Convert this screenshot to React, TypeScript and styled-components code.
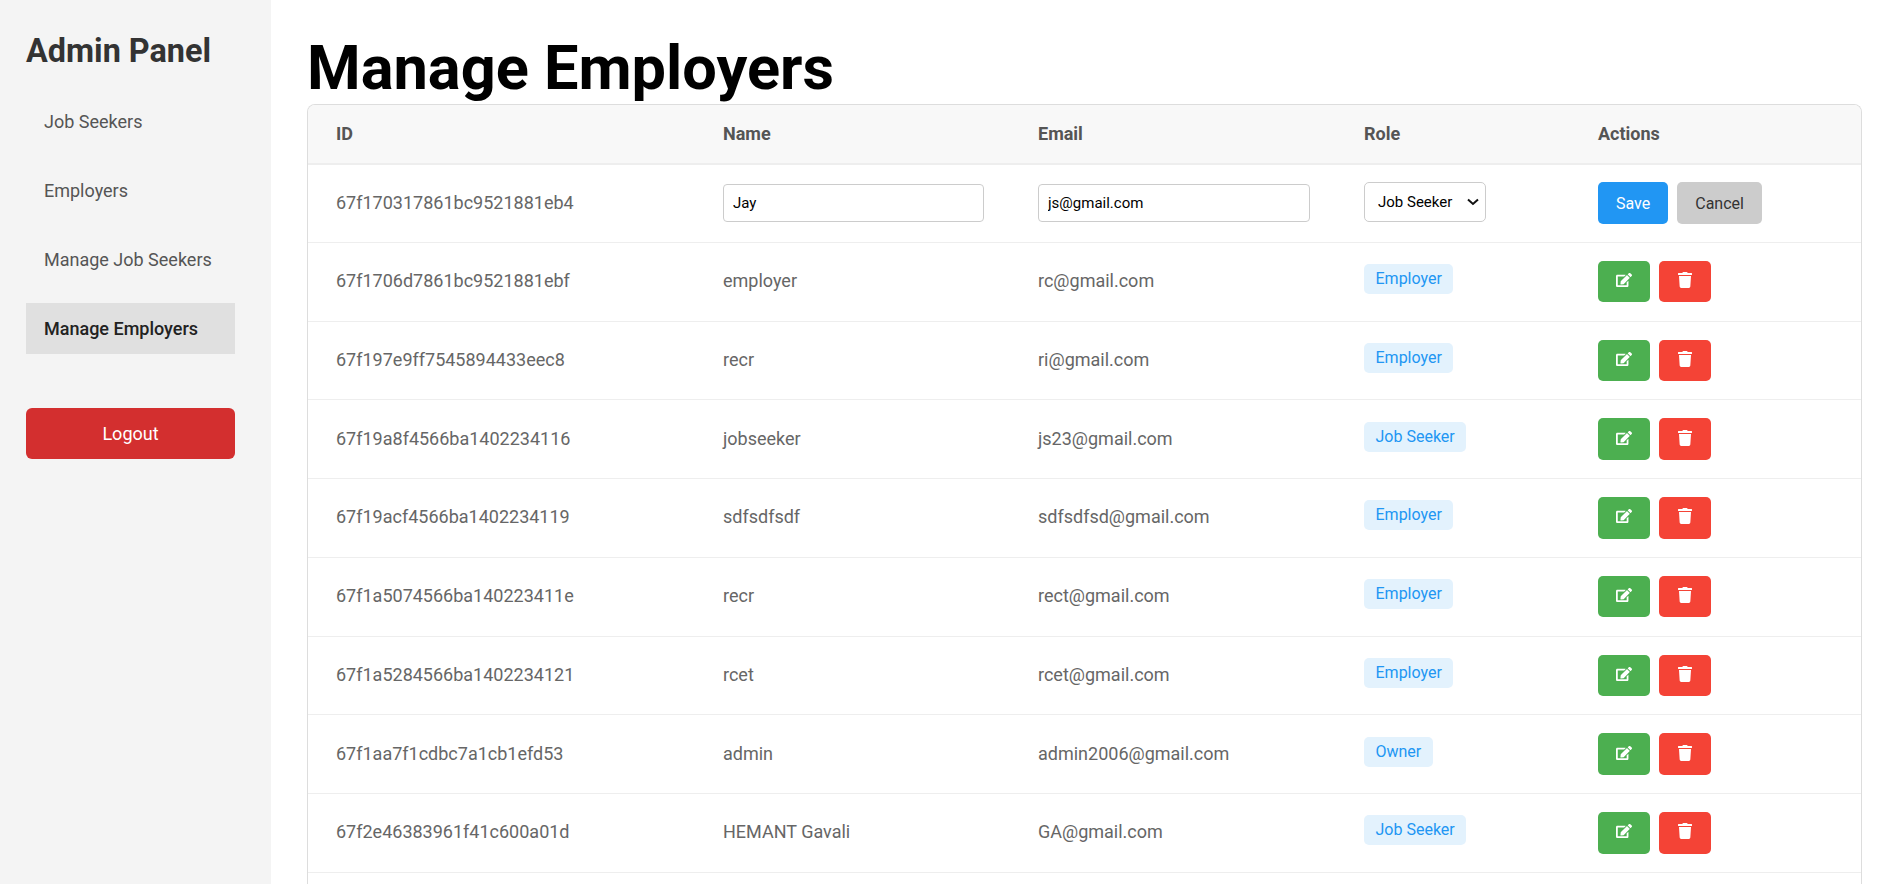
import React from "react";
import styled, { createGlobalStyle } from "styled-components";
import { FaEdit, FaTrash } from "react-icons/fa";

const GlobalStyle = createGlobalStyle`
    html, body {
        margin: 0;
        height: 100%;
        overflow: hidden;
        background: #fff;
        font-family: Roboto, "Liberation Sans", sans-serif;
    }
    * {
        box-sizing: border-box;
    }
`;

type Employer = { id: string; name: string; email: string; role: string };

const employers: Employer[] = [
    { id: "67f1706d7861bc9521881ebf", name: "employer", email: "rc@gmail.com", role: "Employer" },
    { id: "67f197e9ff7545894433eec8", name: "recr", email: "ri@gmail.com", role: "Employer" },
    { id: "67f19a8f4566ba1402234116", name: "jobseeker", email: "js23@gmail.com", role: "Job Seeker" },
    { id: "67f19acf4566ba1402234119", name: "sdfsdfsdf", email: "sdfsdfsd@gmail.com", role: "Employer" },
    { id: "67f1a5074566ba140223411e", name: "recr", email: "rect@gmail.com", role: "Employer" },
    { id: "67f1a5284566ba1402234121", name: "rcet", email: "rcet@gmail.com", role: "Employer" },
    { id: "67f1aa7f1cdbc7a1cb1efd53", name: "admin", email: "admin2006@gmail.com", role: "Owner" },
    { id: "67f2e46383961f41c600a01d", name: "HEMANT Gavali", email: "GA@gmail.com", role: "Job Seeker" },
];

const navItems = ["Job Seekers", "Employers", "Manage Job Seekers", "Manage Employers"];

const chevron =
    "url(\"data:image/svg+xml,%3Csvg xmlns='http://www.w3.org/2000/svg' width='12' height='8' viewBox='0 0 12 8'%3E%3Cpath d='M1 1.5l5 4.5 5-4.5' fill='none' stroke='%23111' stroke-width='2'/%3E%3C/svg%3E\")";

export default function App() {
    return (
        <Page>
            <GlobalStyle />
            <Sidebar>
                <Brand>Admin Panel</Brand>
                <NavList>
                    {navItems.map((item) => (
                        <NavItem key={item} $active={item === "Manage Employers"}>
                            {item}
                        </NavItem>
                    ))}
                </NavList>
                <LogoutButton>Logout</LogoutButton>
            </Sidebar>
            <Main>
                <Title>Manage Employers</Title>
                <TableCard>
                    <Table>
                        <colgroup>
                            <col width={387} />
                            <col width={315} />
                            <col width={326} />
                            <col width={234} />
                            <col />
                        </colgroup>
                        <thead>
                            <tr>
                                <HeadCell>ID</HeadCell>
                                <HeadCell>Name</HeadCell>
                                <HeadCell>Email</HeadCell>
                                <HeadCell>Role</HeadCell>
                                <HeadCell>Actions</HeadCell>
                            </tr>
                        </thead>
                        <tbody>
                            <tr>
                                <Cell>67f170317861bc9521881eb4</Cell>
                                <Cell>
                                    <TextField defaultValue="Jay" />
                                </Cell>
                                <Cell>
                                    <TextField defaultValue="js@gmail.com" />
                                </Cell>
                                <Cell>
                                    <RoleSelect defaultValue="Job Seeker">
                                        <option>Job Seeker</option>
                                        <option>Employer</option>
                                        <option>Owner</option>
                                    </RoleSelect>
                                </Cell>
                                <Cell>
                                    <Actions>
                                        <ActionButton $bg="#2196f3" $fg="#fff">Save</ActionButton>
                                        <ActionButton $bg="#ccc" $fg="#333">Cancel</ActionButton>
                                    </Actions>
                                </Cell>
                            </tr>
                            {employers.map((row) => (
                                <tr key={row.id}>
                                    <Cell>{row.id}</Cell>
                                    <Cell>{row.name}</Cell>
                                    <Cell>{row.email}</Cell>
                                    <Cell>
                                        <RoleBadge>{row.role}</RoleBadge>
                                    </Cell>
                                    <Cell>
                                        <Actions>
                                            <ActionButton $bg="#4caf50" $fg="#fff">
                                                <FaEdit />
                                            </ActionButton>
                                            <ActionButton $bg="#f44336" $fg="#fff">
                                                <FaTrash />
                                            </ActionButton>
                                        </Actions>
                                    </Cell>
                                </tr>
                            ))}
                        </tbody>
                    </Table>
                </TableCard>
            </Main>
        </Page>
    );
}

const Page = styled.div`
    display: flex;
    height: 884px;
    overflow: hidden;
`;

const Sidebar = styled.aside`
    flex: 0 0 271px;
    background: #f4f4f4;
    padding: 32px 36px 0 26px;
`;

const Brand = styled.h2`
    margin: 0 0 26px;
    font-size: 32.4px;
    line-height: 38px;
    font-weight: 700;
    color: #333;
`;

const NavList = styled.div`
    display: flex;
    flex-direction: column;
    gap: 18px;
    margin-bottom: 54px;
`;

const NavItem = styled.div<{ $active?: boolean }>`
    height: 51px;
    line-height: 51px;
    padding: 0 18px;
    font-size: 18px;
    color: ${(props) => (props.$active ? "#222" : "#555")};
    font-weight: ${(props) => (props.$active ? 500 : 400)};
    background: ${(props) => (props.$active ? "#e0e0e0" : "transparent")};
`;

const LogoutButton = styled.button`
    display: block;
    width: 100%;
    height: 51px;
    border: none;
    border-radius: 6px;
    background: #d32f2f;
    color: #fff;
    font-family: inherit;
    font-size: 18px;
`;

const Main = styled.main`
    flex: 1;
    min-width: 0;
    display: flex;
    flex-direction: column;
    padding: 32px 19px 0 36px;
`;

const Title = styled.h1`
    margin: 0;
    font-size: 61.3px;
    line-height: 72px;
    font-weight: 700;
    color: #000;
`;

const TableCard = styled.div`
    flex: 1;
    border: 1px solid #ddd;
    border-bottom: none;
    border-radius: 8px 8px 0 0;
    overflow: hidden;
`;

const Table = styled.table`
    width: 100%;
    table-layout: fixed;
    border-collapse: collapse;
`;

const HeadCell = styled.th`
    height: 58.5px;
    padding: 0 28px 1px;
    text-align: left;
    font-size: 18px;
    font-weight: 700;
    color: #555;
    background: #f8f8f8;
    border-bottom: 2px solid #eee;
`;

const Cell = styled.td`
    height: 78.75px;
    padding: 0 26px 2px 28px;
    font-size: 18px;
    color: #666;
    border-bottom: 1px solid #eee;
`;

const TextField = styled.input`
    display: block;
    width: 100%;
    height: 38px;
    margin-top: 1px;
    padding: 0 9px;
    border: 1px solid #ccc;
    border-radius: 4px;
    font-family: inherit;
    font-size: 15px;
    color: #000;
`;

const RoleSelect = styled.select`
    display: block;
    width: 122px;
    height: 40px;
    padding: 0 8px 0 13px;
    border: 1px solid #ccc;
    border-radius: 5px;
    background: #fff ${chevron} no-repeat right 6px center;
    appearance: none;
    font-family: inherit;
    font-size: 15px;
    color: #000;
`;

const RoleBadge = styled.span`
    display: block;
    width: fit-content;
    margin-bottom: 3px;
    padding: 5px 11.5px;
    border-radius: 5px;
    background: #e3f2fd;
    color: #2196f3;
    font-size: 16px;
    line-height: 20px;
`;

const Actions = styled.div`
    display: flex;
    gap: 9px;
    margin-bottom: -2px;
`;

const ActionButton = styled.button<{ $bg: string; $fg: string }>`
    height: 41.5px;
    padding: 0 18px;
    border: none;
    border-radius: 5px;
    background: ${(props) => props.$bg};
    color: ${(props) => props.$fg};
    font-family: inherit;
    font-size: 16px;

    svg {
        display: block;
        margin-top: -3px;
    }
`;
